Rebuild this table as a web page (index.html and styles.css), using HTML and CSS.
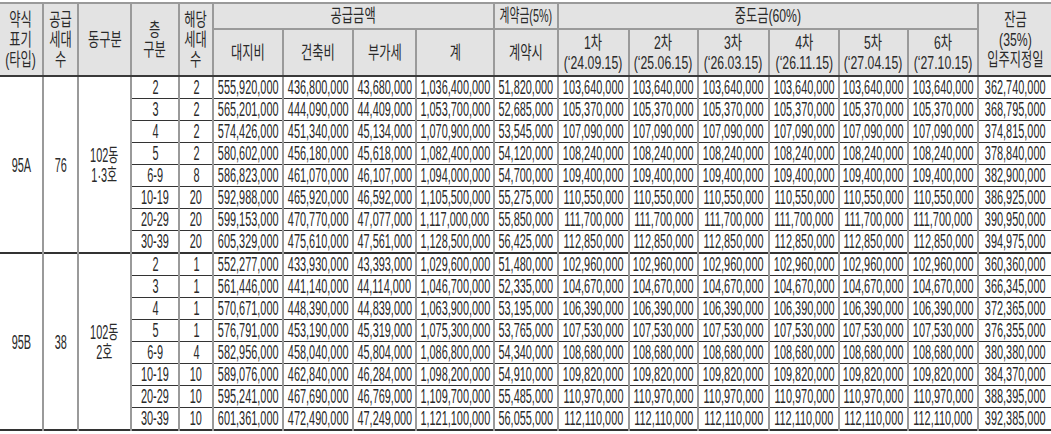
FILE: index.html
```html
<!DOCTYPE html>
<html lang="ko">
<head>
<meta charset="utf-8">
<title>공급금액표</title>
<link rel="stylesheet" href="styles.css">
</head>
<body>
<div class="page">
<table class="price-table">
<colgroup>
<col class="w43"><col class="w35"><col class="w53"><col class="w48"><col class="w34">
<col class="w70"><col class="w70"><col class="w63"><col class="w78"><col class="w64">
<col class="w71"><col class="w69"><col class="w71"><col class="w70"><col class="w69"><col class="w70"><col class="w73">
</colgroup>
<thead>
<tr class="h1">
<th rowspan="2"><span>약식<br>표기<br>(타입)</span></th>
<th rowspan="2"><span>공급<br>세대<br>수</span></th>
<th rowspan="2"><span>동구분</span></th>
<th rowspan="2"><span>층<br>구분</span></th>
<th rowspan="2"><span>해당<br>세대<br>수</span></th>
<th colspan="4"><span>공급금액</span></th>
<th><span class="tight">계약금(5%)</span></th>
<th colspan="6"><span>중도금(60%)</span></th>
<th rowspan="2"><span>잔금<br>(35%)<br>입주지정일</span></th>
</tr>
<tr class="h2">
<th><span>대지비</span></th>
<th><span>건축비</span></th>
<th><span>부가세</span></th>
<th><span>계</span></th>
<th><span>계약시</span></th>
<th><span>1차<br>(‘24.09.15)</span></th>
<th><span>2차<br>(‘25.06.15)</span></th>
<th><span>3차<br>(‘26.03.15)</span></th>
<th><span>4차<br>(‘26.11.15)</span></th>
<th><span>5차<br>(‘27.04.15)</span></th>
<th><span>6차<br>(‘27.10.15)</span></th>
</tr>
</thead>
<tbody class="group">
<tr><td rowspan="8" class="grp"><span>95A</span></td><td rowspan="8" class="grp"><span>76</span></td><td rowspan="8" class="grp"><span>102동<br>1·3호</span></td>
<td><span>2</span></td><td><span>2</span></td><td><span>555,920,000</span></td><td><span>436,800,000</span></td><td><span>43,680,000</span></td><td><span>1,036,400,000</span></td><td><span>51,820,000</span></td><td><span>103,640,000</span></td><td><span>103,640,000</span></td><td><span>103,640,000</span></td><td><span>103,640,000</span></td><td><span>103,640,000</span></td><td><span>103,640,000</span></td><td><span>362,740,000</span></td></tr>
<tr><td><span>3</span></td><td><span>2</span></td><td><span>565,201,000</span></td><td><span>444,090,000</span></td><td><span>44,409,000</span></td><td><span>1,053,700,000</span></td><td><span>52,685,000</span></td><td><span>105,370,000</span></td><td><span>105,370,000</span></td><td><span>105,370,000</span></td><td><span>105,370,000</span></td><td><span>105,370,000</span></td><td><span>105,370,000</span></td><td><span>368,795,000</span></td></tr>
<tr><td><span>4</span></td><td><span>2</span></td><td><span>574,426,000</span></td><td><span>451,340,000</span></td><td><span>45,134,000</span></td><td><span>1,070,900,000</span></td><td><span>53,545,000</span></td><td><span>107,090,000</span></td><td><span>107,090,000</span></td><td><span>107,090,000</span></td><td><span>107,090,000</span></td><td><span>107,090,000</span></td><td><span>107,090,000</span></td><td><span>374,815,000</span></td></tr>
<tr><td><span>5</span></td><td><span>2</span></td><td><span>580,602,000</span></td><td><span>456,180,000</span></td><td><span>45,618,000</span></td><td><span>1,082,400,000</span></td><td><span>54,120,000</span></td><td><span>108,240,000</span></td><td><span>108,240,000</span></td><td><span>108,240,000</span></td><td><span>108,240,000</span></td><td><span>108,240,000</span></td><td><span>108,240,000</span></td><td><span>378,840,000</span></td></tr>
<tr><td><span>6-9</span></td><td><span>8</span></td><td><span>586,823,000</span></td><td><span>461,070,000</span></td><td><span>46,107,000</span></td><td><span>1,094,000,000</span></td><td><span>54,700,000</span></td><td><span>109,400,000</span></td><td><span>109,400,000</span></td><td><span>109,400,000</span></td><td><span>109,400,000</span></td><td><span>109,400,000</span></td><td><span>109,400,000</span></td><td><span>382,900,000</span></td></tr>
<tr><td><span>10-19</span></td><td><span>20</span></td><td><span>592,988,000</span></td><td><span>465,920,000</span></td><td><span>46,592,000</span></td><td><span>1,105,500,000</span></td><td><span>55,275,000</span></td><td><span>110,550,000</span></td><td><span>110,550,000</span></td><td><span>110,550,000</span></td><td><span>110,550,000</span></td><td><span>110,550,000</span></td><td><span>110,550,000</span></td><td><span>386,925,000</span></td></tr>
<tr><td><span>20-29</span></td><td><span>20</span></td><td><span>599,153,000</span></td><td><span>470,770,000</span></td><td><span>47,077,000</span></td><td><span>1,117,000,000</span></td><td><span>55,850,000</span></td><td><span>111,700,000</span></td><td><span>111,700,000</span></td><td><span>111,700,000</span></td><td><span>111,700,000</span></td><td><span>111,700,000</span></td><td><span>111,700,000</span></td><td><span>390,950,000</span></td></tr>
<tr><td><span>30-39</span></td><td><span>20</span></td><td><span>605,329,000</span></td><td><span>475,610,000</span></td><td><span>47,561,000</span></td><td><span>1,128,500,000</span></td><td><span>56,425,000</span></td><td><span>112,850,000</span></td><td><span>112,850,000</span></td><td><span>112,850,000</span></td><td><span>112,850,000</span></td><td><span>112,850,000</span></td><td><span>112,850,000</span></td><td><span>394,975,000</span></td></tr>
</tbody>
<tbody class="group">
<tr><td rowspan="8" class="grp"><span>95B</span></td><td rowspan="8" class="grp"><span>38</span></td><td rowspan="8" class="grp"><span>102동<br>2호</span></td>
<td><span>2</span></td><td><span>1</span></td><td><span>552,277,000</span></td><td><span>433,930,000</span></td><td><span>43,393,000</span></td><td><span>1,029,600,000</span></td><td><span>51,480,000</span></td><td><span>102,960,000</span></td><td><span>102,960,000</span></td><td><span>102,960,000</span></td><td><span>102,960,000</span></td><td><span>102,960,000</span></td><td><span>102,960,000</span></td><td><span>360,360,000</span></td></tr>
<tr><td><span>3</span></td><td><span>1</span></td><td><span>561,446,000</span></td><td><span>441,140,000</span></td><td><span>44,114,000</span></td><td><span>1,046,700,000</span></td><td><span>52,335,000</span></td><td><span>104,670,000</span></td><td><span>104,670,000</span></td><td><span>104,670,000</span></td><td><span>104,670,000</span></td><td><span>104,670,000</span></td><td><span>104,670,000</span></td><td><span>366,345,000</span></td></tr>
<tr><td><span>4</span></td><td><span>1</span></td><td><span>570,671,000</span></td><td><span>448,390,000</span></td><td><span>44,839,000</span></td><td><span>1,063,900,000</span></td><td><span>53,195,000</span></td><td><span>106,390,000</span></td><td><span>106,390,000</span></td><td><span>106,390,000</span></td><td><span>106,390,000</span></td><td><span>106,390,000</span></td><td><span>106,390,000</span></td><td><span>372,365,000</span></td></tr>
<tr><td><span>5</span></td><td><span>1</span></td><td><span>576,791,000</span></td><td><span>453,190,000</span></td><td><span>45,319,000</span></td><td><span>1,075,300,000</span></td><td><span>53,765,000</span></td><td><span>107,530,000</span></td><td><span>107,530,000</span></td><td><span>107,530,000</span></td><td><span>107,530,000</span></td><td><span>107,530,000</span></td><td><span>107,530,000</span></td><td><span>376,355,000</span></td></tr>
<tr><td><span>6-9</span></td><td><span>4</span></td><td><span>582,956,000</span></td><td><span>458,040,000</span></td><td><span>45,804,000</span></td><td><span>1,086,800,000</span></td><td><span>54,340,000</span></td><td><span>108,680,000</span></td><td><span>108,680,000</span></td><td><span>108,680,000</span></td><td><span>108,680,000</span></td><td><span>108,680,000</span></td><td><span>108,680,000</span></td><td><span>380,380,000</span></td></tr>
<tr><td><span>10-19</span></td><td><span>10</span></td><td><span>589,076,000</span></td><td><span>462,840,000</span></td><td><span>46,284,000</span></td><td><span>1,098,200,000</span></td><td><span>54,910,000</span></td><td><span>109,820,000</span></td><td><span>109,820,000</span></td><td><span>109,820,000</span></td><td><span>109,820,000</span></td><td><span>109,820,000</span></td><td><span>109,820,000</span></td><td><span>384,370,000</span></td></tr>
<tr><td><span>20-29</span></td><td><span>10</span></td><td><span>595,241,000</span></td><td><span>467,690,000</span></td><td><span>46,769,000</span></td><td><span>1,109,700,000</span></td><td><span>55,485,000</span></td><td><span>110,970,000</span></td><td><span>110,970,000</span></td><td><span>110,970,000</span></td><td><span>110,970,000</span></td><td><span>110,970,000</span></td><td><span>110,970,000</span></td><td><span>388,395,000</span></td></tr>
<tr><td><span>30-39</span></td><td><span>10</span></td><td><span>601,361,000</span></td><td><span>472,490,000</span></td><td><span>47,249,000</span></td><td><span>1,121,100,000</span></td><td><span>56,055,000</span></td><td><span>112,110,000</span></td><td><span>112,110,000</span></td><td><span>112,110,000</span></td><td><span>112,110,000</span></td><td><span>112,110,000</span></td><td><span>112,110,000</span></td><td><span>392,385,000</span></td></tr>
</tbody>
</table>
</div>
</body>
</html>
```
FILE: styles.css
```css
html, body {
  margin: 0;
  padding: 0;
  background: #ffffff;
}

.page {
  padding-top: 2px;
  width: 1051px;
}

.price-table {
  border-collapse: collapse;
  table-layout: fixed;
  width: 1051px;
  font-family: "Liberation Sans", "Noto Sans CJK KR", sans-serif;
  font-size: 19.5px;
  color: #2a2a2a;
  border-top: 2px solid #6a6a6a;
  border-bottom: 2px solid #333333;
}

.w34 { width: 34px; }
.w35 { width: 35px; }
.w43 { width: 43px; }
.w48 { width: 48px; }
.w53 { width: 53px; }
.w63 { width: 63px; }
.w64 { width: 64px; }
.w69 { width: 69px; }
.w70 { width: 70px; }
.w71 { width: 71px; }
.w73 { width: 73px; }
.w78 { width: 78px; }

.price-table th,
.price-table td {
  padding: 0;
  text-align: center;
  vertical-align: middle;
  overflow: visible;
  white-space: nowrap;
  font-weight: 400;
}

.price-table th {
  background: #e3e3e3;
  font-size: 18px;
  line-height: 20px;
  border: 2px solid #9a9a9a;
}

.price-table th:first-child {
  border-left: none;
}

.price-table .h1 th:last-child {
  border-right: none;
}

.price-table .h1 {
  height: 26px;
}

.price-table .h2 {
  height: 47px;
}

.price-table .h2 th,
.price-table .h1 th[rowspan] {
  border-bottom: 2px solid #3a3a3a;
}

.price-table td {
  line-height: 21px;
  height: 21px;
  border-top: 1px solid #333333;
  border-bottom: 1px solid #333333;
  border-left: 2px solid #9a9a9a;
  border-right: 2px solid #9a9a9a;
}

.price-table td:last-child {
  border-right: none;
}

.price-table td.grp {
  line-height: 20px;
}

.price-table tr td.grp:first-child {
  border-left: none;
}

.price-table tbody + tbody tr:first-child td {
  border-top: 2px solid #333333;
}

.price-table span {
  display: inline-block;
  margin: 0 -60px;
  transform: scaleX(0.56);
  transform-origin: center center;
}

.price-table th span {
  transform: scaleX(0.68);
}

.price-table th span.tight {
  transform: scaleX(0.6);
}
```
